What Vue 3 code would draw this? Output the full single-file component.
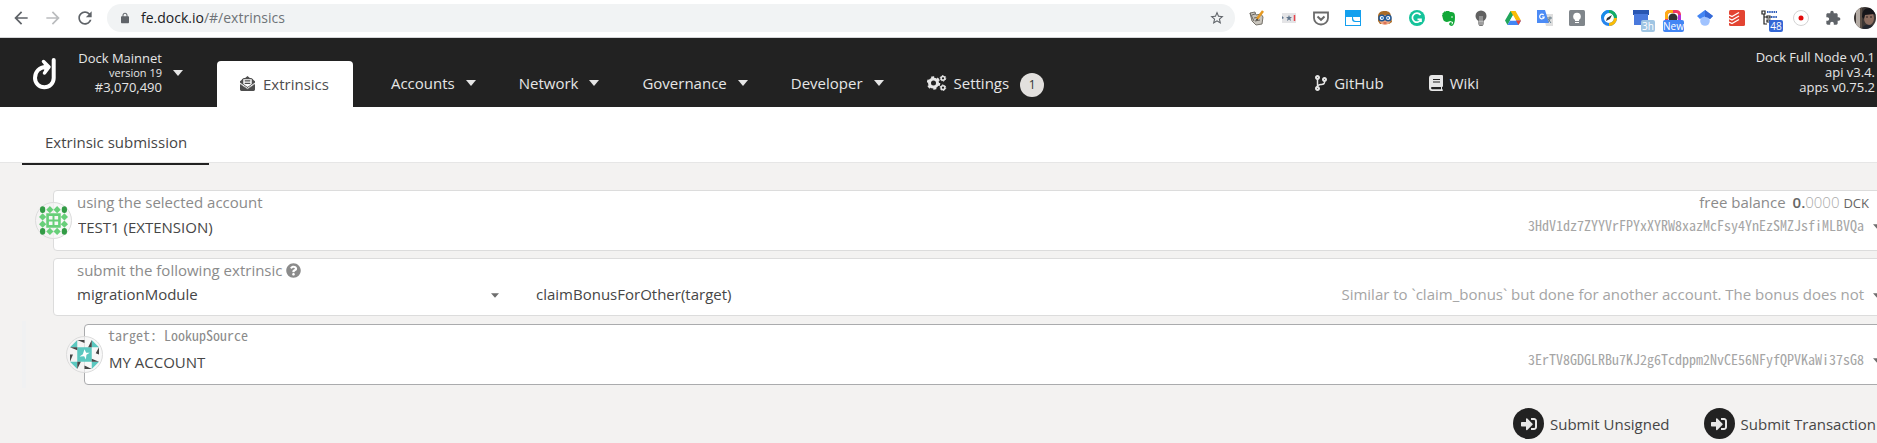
<script setup>
import { ref } from 'vue'

const menus = ['Accounts', 'Network', 'Governance', 'Developer']
const account = ref('TEST1 (EXTENSION)')
const section = ref('migrationModule')
const method = ref('claimBonusForOther(target)')
const target = ref('MY ACCOUNT')
const actions = ['Submit Unsigned', 'Submit Transaction']
const lattice = [11, 33, 55, 77]
const isCorner = (x, y) => (x === 11 || x === 77) && (y === 11 || y === 77)
const isEdge = (x, y) => x === 11 || x === 77 || y === 11 || y === 77
</script>

<template>
  <div class="window">
    <div class="browser">
      <div class="controls">
        <button class="tool" aria-label="Back"><svg viewBox="0 0 24 24"><path fill="#5f6368" d="M20 11H7.83l5.59-5.59L12 4l-8 8 8 8 1.41-1.41L7.83 13H20v-2z" /></svg></button>
        <button class="tool" aria-label="Forward"><svg viewBox="0 0 24 24"><path fill="#babcbe" d="M4 11h12.17l-5.59-5.59L12 4l8 8-8 8-1.41-1.41L16.17 13H4v-2z" /></svg></button>
        <button class="tool" aria-label="Reload"><svg viewBox="0 0 24 24"><path fill="#5f6368" d="M17.65 6.35C16.2 4.9 14.21 4 12 4c-4.42 0-7.99 3.58-7.99 8s3.57 8 7.99 8c3.73 0 6.84-2.55 7.73-6h-2.08c-.82 2.33-3.04 4-5.65 4-3.31 0-6-2.69-6-6s2.69-6 6-6c1.66 0 3.14.69 4.22 1.78L13 11h7V4l-2.35 2.35z" /></svg></button>
      </div>
      <div class="address">
        <svg class="lock" viewBox="4 1 16 21"><path fill="#5f6368" d="M18 8h-1V6c0-2.76-2.24-5-5-5S7 3.24 7 6v2H6c-1.1 0-2 .9-2 2v10c0 1.1.9 2 2 2h12c1.1 0 2-.9 2-2V10c0-1.1-.9-2-2-2zM9 6c0-1.66 1.34-3 3-3s3 1.34 3 3v2H9z" /></svg>
        <span class="url"><b>fe.dock.io</b>/#/extrinsics</span>
        <button class="star" aria-label="Bookmark"><svg viewBox="0 0 24 24"><path fill="#5f6368" d="M22 9.24l-7.19-.62L12 2 9.19 8.63 2 9.24l5.46 4.73L5.82 21 12 17.27 18.18 21l-1.63-7.03L22 9.24zM12 15.4l-3.76 2.27 1-4.28-3.32-2.88 4.38-.38L12 6.1l1.71 4.04 4.38.38-3.32 2.88 1 4.28L12 15.4z" /></svg></button>
      </div>
      <div class="extensions">
        <button aria-label="Notes"><svg viewBox="0 0 16 16"><path d="M1 3l5-1 1 3 5-1 2 3-1 7-6 1-4-4z" fill="#c9c5bd" stroke="#77736b" /><path d="M3 5l3-1M5 8l5-1M6 11l5-1M1 3l4 8" stroke="#68645e" /><path d="M8 9L14 1" stroke="#e69a22" stroke-width="2.5" /><path d="M7 10l2-1" stroke="#333" /></svg></button>
        <button aria-label="Password"><svg viewBox="0 0 16 16"><path d="M1 3h14v10H1z" fill="#e4e4e6" /><path d="M1 6l1 1 1 1-2 1M8 5l.8 2H11L9.300 8.500 10 11 8 9.500 6 11l.7-2.500L5 7h2.200z" fill="#60758c" /><path d="M13.500 5v6" stroke="#e8434a" stroke-width="1.500" /></svg></button>
        <button aria-label="Pocket"><svg viewBox="0 0 16 16"><path d="M1 2.500h14V8a7 6.500 0 0 1-14 0z" fill="none" stroke="#6b6b6b" stroke-width="1.800" /><path d="M4.500 6.500L8 9.800l3.500-3.300" fill="none" stroke="#6b6b6b" stroke-width="2" /></svg></button>
        <button aria-label="Tabs"><svg viewBox="0 0 16 16"><path d="M0 0h16v16H0z" fill="#14a0ee" /><path d="M1 7h6v2q0 3 3 3h5v3H1zM8 7h7v4h-4q-3 0-3-4z" fill="#fff" /></svg></button>
        <button aria-label="Owl"><svg viewBox="0 0 16 16"><path d="M1 7c0-5 3-6 7-6s6 2 6 6l1 5-3 2H3l-2-3z" fill="#aa6b25" /><ellipse cx="8" cy="10" rx="5.500" ry="5" fill="#f2a882" /><circle cx="4.800" cy="8" r="2.800" fill="#fff" stroke="#245892" stroke-width="1.500" /><circle cx="11.200" cy="8" r="2.800" fill="#fff" stroke="#245892" stroke-width="1.500" /><circle cx="5" cy="8" r="1" fill="#2678c9" /><circle cx="11" cy="8" r="1" fill="#2678c9" /><path d="M6.500 13h3" stroke="#bd3c35" /></svg></button>
        <button aria-label="Grammar"><svg viewBox="0 0 16 16"><circle cx="8" cy="8" r="8" fill="#15c39a" /><path d="M11.500 5A4.500 4.500 0 1 0 12 9.500M8.500 9.300H12V12" fill="none" stroke="#fff" stroke-width="1.700" /></svg></button>
        <button aria-label="Clipper"><svg viewBox="0 0 16 16"><path d="M1 5l4-4 3 0 1 1c4 0 5 1 5 5 0 5-1 8-3 9-3 0-4-3-1-4l1 1c0 1-1 1-1 1 1 1 2 0 2-2l-3-1c-1 1-6 2-7-2zM1 4l3-3v3z" fill="#12a838" /><circle cx="11" cy="7" r=".8" fill="#fff" /></svg></button>
        <button aria-label="Bulb"><svg viewBox="0 0 16 16"><circle cx="8" cy="6" r="5.500" fill="#616161" /><path d="M5 10h6v4l-1.500 2h-3L5 14z" fill="#777" /><path d="M5 12h6M5 14h6M7 6v6M9 6v6" stroke="#ddd" stroke-width=".8" /></svg></button>
        <button aria-label="Drive"><svg viewBox="0 0 16 16"><path d="M5.500 1h5L5 10.500 2.500 15 0 10.500z" fill="#21a65b" /><path d="M5.500 1h5L16 10.500h-5z" fill="#fbbc05" /><path d="M5 10.500h11L13.500 15h-11z" fill="#4285f4" /><path d="M11 10.500h5L13.500 15z" fill="#ea4335" /><path d="M8 5.300l3 5.200H5z" fill="#fff" /></svg></button>
        <button aria-label="Translate"><svg viewBox="0 0 16 16"><path d="M6 4h10v12H9z" fill="#dedede" /><path d="M0 0h8l4 13H0z" fill="#4c8bf5" /><path d="M6.700 5A2.300 2.300 0 1 0 7.200 7H5" fill="none" stroke="#fff" stroke-width="1.200" /><path d="M10 8h5M13 6.500V8c0 3-2 4-2 4m0-3l3 4" fill="none" stroke="#687e8b" /></svg></button>
        <button aria-label="Hints"><svg viewBox="0 0 16 16"><rect width="16" height="16" rx="1.500" fill="#80868b" /><circle cx="8" cy="6.500" r="3.800" fill="#fff" /><path d="M6 9h4v2H6zM6 12h4v1H6z" fill="#fff" /></svg></button>
        <button aria-label="Compass"><svg viewBox="0 0 16 16"><circle cx="8" cy="8" r="6.500" fill="#fff" stroke="#2685ee" stroke-width="3" /><path d="M8 1.500A6.500 6.500 0 0 1 14.500 8" fill="none" stroke="#14ae61" stroke-width="3" /><path d="M1.500 8A6.500 6.500 0 0 1 8 1.500" fill="none" stroke="#198be8" stroke-width="3" /><path d="M14.500 8A6.500 6.500 0 0 1 8 14.500" fill="none" stroke="#fbbc05" stroke-width="3" /><path d="M5 11l1-3 5-3-2 4z" fill="#333" /></svg></button>
        <button aria-label="Timer"><svg viewBox="0 0 16 16"><path d="M0 0h16v5H0z" fill="#2956b2" /><path d="M1 4h14v11H1z" fill="#4a79dc" /></svg><i class="tag pale">3h</i></button>
        <button aria-label="Camera"><svg viewBox="0 0 16 16"><rect x="1.500" y="1.500" width="13" height="13" rx="3" fill="#fff" stroke="#f33864" stroke-width="3" /><path d="M1.500 9V4q0-2.500 3-2.500H8" fill="none" stroke="#ffad15" stroke-width="3" /><path d="M14.500 5v7" stroke="#b333dc" stroke-width="3" /><circle cx="8" cy="8" r="4.500" fill="#333" /></svg><i class="tag bright">New</i></button>
        <button aria-label="Scholar"><svg viewBox="0 0 16 16"><circle cx="8" cy="11" r="4.800" fill="#a0c3ff" /><path d="M8 0l8 6-3 3q-5-5-10 0L0 6z" fill="#4285f4" /><path d="M8 0l8 6-3 3q-2-2-5-2z" fill="#3568d5" /></svg></button>
        <button aria-label="Tasks"><svg viewBox="0 0 16 16"><rect width="16" height="16" rx="1.500" fill="#e34432" /><path d="M0 5l3 1.500L10 2.500M0 8.500L3 10l7-4M0 12l3 1.500 7-4" fill="none" stroke="#fff" stroke-width="1.300" /></svg></button>
        <button aria-label="Tab tree"><svg viewBox="0 0 16 16"><path d="M1 1h3v3H1zM3 4v10h3M3 7h3M6 6h3v2H6zM6 10h3v2H6z" fill="none" stroke="#222" stroke-width="1.200" /><path d="M6 2h10M10 7h6M10 11h6" stroke="#315fba" stroke-width="2" stroke-dasharray="1.500 .7" /></svg><i class="tag blue">48</i></button>
        <button aria-label="Record"><svg viewBox="0 0 16 16"><circle cx="8" cy="8" r="7.500" fill="#fff" stroke="#d3d3d3" /><circle cx="8" cy="8" r="2.500" fill="#e30b0b" /></svg></button>
        <button aria-label="Extensions"><svg viewBox="0 0 24 24"><path fill="#5f6368" d="M20.5 11H19V7c0-1.1-.9-2-2-2h-4V3.5C13 2.12 11.88 1 10.5 1S8 2.12 8 3.500V5H4c-1.1 0-1.99.9-1.99 2v3.8H3.500c1.49 0 2.7 1.21 2.7 2.7s-1.21 2.7-2.7 2.7H2V20c0 1.1.9 2 2 2h3.8v-1.500c0-1.49 1.21-2.7 2.7-2.7 1.49 0 2.7 1.21 2.7 2.7V22H17c1.1 0 2-.9 2-2v-4h1.500c1.38 0 2.500-1.12 2.500-2.500S21.88 11 20.500 11z" /></svg></button>
        <button aria-label="Profile"><svg class="avatar" viewBox="0 0 22 22"><clipPath id="face"><circle cx="11" cy="11" r="11" /></clipPath><g clip-path="url(#face)"><path d="M0 0h22v22H0z" fill="#3d3735" /><path d="M2 0h4v22H2z" fill="#b5aca5" /><path d="M6 0h2v22H6z" fill="#5c5048" /><ellipse cx="15" cy="11" rx="5" ry="7" fill="#8c6d60" /><path d="M8 10q0-9 7-9t7 8l-2-2-9 1-1 4z" fill="#15151a" /><path d="M12 10h2M16 10h2" stroke="#2b2020" /><path d="M8 22q2-5 7-4t7 1v3z" fill="#23262f" /></g></svg></button>
      </div>
    </div>

    <header class="top">
      <button class="chain">
        <svg class="logo" viewBox="0 0 24 34"><path d="M21.700 4V22A9.300 9.300 0 0 1 3 22C3 16 7 11 14 11" fill="none" stroke="#fff" stroke-width="4" stroke-linecap="round" /><path d="M11.500 5.500L17 11l-4.500 6" fill="#fff" stroke="#fff" stroke-width="3.500" stroke-linejoin="round" stroke-linecap="round" /></svg>
        <span class="facts"><span>Dock Mainnet</span><small>version 19</small><span>#3,070,490</span></span>
        <svg class="caret" viewBox="0 0 10 6"><path d="M0 0h10L5 6z" /></svg>
      </button>
      <nav class="menu">
        <a class="item active" href="#/extrinsics"><svg class="glyph" viewBox="0 0 16 16"><path d="M2 3.500L4 2h1.500L8 0l2.500 2H12l2 1.500V4l2 1.500V8l-8 6-8-6V5.500L2 4z" fill="#4e4e4e" /><path d="M3.500 3.500h9v5L8 11.800 3.500 8.500z" fill="#fff" /><path d="M5 5.200h6M5 7.800h6" stroke="#4e4e4e" stroke-width="1.300" /><path d="M0 7.500l8 5.700 8-5.700" fill="none" stroke="#fff" /><path d="M0 8.500l8 5.500 8-5.500v6q0 1.500-1.500 1.500h-13Q0 16 0 14.500z" fill="#4e4e4e" /></svg>Extrinsics</a>
        <a v-for="m in menus" :key="m" class="item" href="#/">{{ m }}<svg class="caret" viewBox="0 0 10 6"><path d="M0 0h10L5 6z" /></svg></a>
        <a class="item" href="#/settings"><svg class="cogs" viewBox="0 0 20 16"><circle cx="6.500" cy="8" r="4" fill="none" stroke="#e6e6e6" stroke-width="3" /><circle cx="6.500" cy="8" r="5.800" fill="none" stroke="#e6e6e6" stroke-width="2" stroke-dasharray="3 3.070" /><circle cx="16" cy="3.300" r="1.900" fill="none" stroke="#e6e6e6" stroke-width="1.500" /><circle cx="16" cy="3.300" r="2.800" fill="none" stroke="#e6e6e6" stroke-width="1" stroke-dasharray="1.500 1.430" /><circle cx="16" cy="12.700" r="1.900" fill="none" stroke="#e6e6e6" stroke-width="1.500" /><circle cx="16" cy="12.700" r="2.800" fill="none" stroke="#e6e6e6" stroke-width="1" stroke-dasharray="1.500 1.430" /></svg>Settings<span class="count">1</span></a>
      </nav>
      <nav class="links">
        <a class="item" href="#/github"><svg class="branch" viewBox="0 0 384 512"><path fill="#e6e6e6" d="M384 144c0-44.2-35.8-80-80-80s-80 35.8-80 80c0 36.4 24.3 67.1 57.5 76.8-.6 16.1-4.2 28.5-11 36.9-15.4 19.2-49.3 22.4-85.2 25.7-28.2 2.600-57.4 5.400-81.3 16.9v-144c32.5-10.2 56-40.5 56-76.3 0-44.2-35.8-80-80-80S0 35.8 0 80c0 35.8 23.5 66.1 56 76.3v199.3C23.5 365.9 0 396.2 0 432c0 44.2 35.8 80 80 80s80-35.8 80-80c0-34-21.2-63.1-51.2-74.6 3.1-5.2 7.8-9.8 14.9-13.4 16.2-8.2 40.4-10.4 66.1-12.8 42.2-3.9 90-8.4 118.2-43.4 14-17.4 21.1-39.8 21.6-67.9 31.6-10.8 54.4-40.7 54.4-75.9zM80 64c8.8 0 16 7.2 16 16s-7.2 16-16 16-16-7.2-16-16 7.2-16 16-16zm0 384c-8.8 0-16-7.2-16-16s7.2-16 16-16 16 7.2 16 16-7.2 16-16 16zm224-320c8.8 0 16 7.2 16 16s-7.2 16-16 16-16-7.2-16-16 7.2-16 16-16z" /></svg>GitHub</a>
        <a class="item" href="#/wiki"><svg class="book" viewBox="0 0 14 16"><path d="M3 0h10q1 0 1 1v10q0 1-1 1v2.200q1 0 1 .9t-1 .9H3q-3 0-3-3V3q0-3 3-3z" fill="#e6e6e6" /><path d="M4 4.500h7M4 7h7" stroke="#222" stroke-width="1.100" /><path d="M12 12H3q-1 0-1 1t1 1.200h9z" fill="#222" /></svg>Wiki</a>
      </nav>
      <div class="facts node"><span>Dock Full Node v0.1</span><span>api v3.4.</span><span>apps v0.75.2</span></div>
    </header>

    <nav class="tabs"><a class="tab" href="#/extrinsics">Extrinsic submission</a></nav>

    <main class="page">
      <section class="panel">
        <span class="identicon"><svg viewBox="0 0 88 88"><template v-for="y in lattice" :key="y"><template v-for="x in lattice" :key="x"><ellipse v-if="isCorner(x, y)" :cx="x" :cy="y" rx="8" ry="10" fill="#329b45" /><path v-else-if="isEdge(x, y)" :transform="`translate(${x} ${y})`" d="M0-11L11 0 0 11-11 0z" fill="#67cf79" /></template></template><path d="M22 22h44v44H22z" fill="#67cf79" /><path d="M30 30h11v11H30zM47 30h11v11H47zM30 47h11v11H30zM47 47h11v11H47z" fill="#f8f8f8" /></svg></span>
        <div class="field grow">
          <label for="account">using the selected account</label>
          <select id="account" v-model="account" class="inset"><option>TEST1 (EXTENSION)</option></select>
        </div>
        <div class="aside">
          <p class="balance">free balance <span class="amount"><b>0.</b><i>0000</i> <small>DCK</small></span></p>
          <p class="hash">3HdV1dz7ZYYVrFPYxXYRW8xazMcFsy4YnEzSMZJsfiMLBVQa<svg class="drop" viewBox="0 0 9 5"><path d="M0 0h9L4.500 5z" /></svg></p>
        </div>
      </section>

      <section class="panel method">
        <div class="field grow">
          <label for="section">submit the following extrinsic <svg class="help" viewBox="0 0 512 512"><path fill="#8b8b8b" d="M504 256c0 136.997-111.043 248-248 248S8 392.997 8 256C8 119.083 119.043 8 256 8s248 111.083 248 248zM262.655 90c-54.497 0-89.255 22.957-116.549 63.758-3.536 5.286-2.353 12.415 2.715 16.258l34.699 26.31c5.205 3.947 12.621 3.008 16.665-2.122 17.864-22.658 30.113-35.797 57.303-35.797 20.429 0 45.698 13.148 45.698 32.958 0 14.976-12.363 22.667-32.534 33.976C247.128 238.528 216 254.941 216 296v4c0 6.627 5.373 12 12 12h56c6.627 0 12-5.373 12-12v-1.333c0-28.462 83.186-29.647 83.186-106.667 0-58.002-60.165-102-116.531-102zM256 338c-25.365 0-46 20.635-46 46 0 25.364 20.635 46 46 46s46-20.636 46-46c0-25.365-20.635-46-46-46z" /></svg></label>
          <div class="pair">
            <div class="choice"><select id="section" v-model="section"><option>migrationModule</option></select><svg class="drop" viewBox="0 0 9 5"><path d="M0 0h9L4.500 5z" /></svg></div>
            <div class="choice"><select v-model="method" aria-label="method"><option>claimBonusForOther(target)</option></select><span class="doc">Similar to `claim_bonus` but done for another account. The bonus does not</span><svg class="drop" viewBox="0 0 9 5"><path d="M0 0h9L4.500 5z" /></svg></div>
          </div>
        </div>
      </section>

      <div class="params">
        <section class="panel param">
          <span class="identicon"><svg viewBox="0 0 88 88"><path d="M0 22L22 0v22h44V0l22 22H66v44h22L66 88V66H22v22L0 66h22V22z" fill="#5bc8c0" /><path d="M22 0h22v9zM66 0v22H55zM88 22v22l-10-4zM66 57l22 9H66zM0 22h22v9zM0 44h9L0 66zM22 88V66h11zM44 77l22 11H44z" fill="#454545" /><path d="M44 28l5 11 11 0-10 6-2 14-5-10-14 1 10-7z" fill="#fff" /></svg></span>
          <div class="field grow">
            <label for="target" class="mono">target: LookupSource</label>
            <select id="target" v-model="target" class="inset"><option>MY ACCOUNT</option></select>
          </div>
          <p class="hash low">3ErTV8GDGLRBu7KJ2g6Tcdppm2NvCE56NFyfQPVKaWi37sG8<svg class="drop" viewBox="0 0 9 5"><path d="M0 0h9L4.500 5z" /></svg></p>
        </section>
      </div>

      <div class="actions">
        <button v-for="a in actions" :key="a" class="submit"><span class="disc"><svg viewBox="0 0 512 512"><path fill="#e6e6e6" d="M416 448h-84c-6.6 0-12-5.400-12-12v-40c0-6.6 5.400-12 12-12h84c17.7 0 32-14.3 32-32V160c0-17.7-14.3-32-32-32h-84c-6.6 0-12-5.400-12-12V76c0-6.6 5.400-12 12-12h84c53 0 96 43 96 96v192c0 53-43 96-96 96zm-47-201L201 79c-15-15-41-4.500-41 17v96H24c-13.3 0-24 10.7-24 24v96c0 13.3 10.7 24 24 24h136v96c0 21.500 26 32 41 17l168-168c9.3-9.400 9.3-24.600 0-34z" /></svg></span>{{ a }}</button>
      </div>
    </main>
  </div>
</template>

<style>
body { background: #f3f2f1; }
</style>

<style scoped>
.window { min-height: 100vh; overflow: hidden; background: #f3f2f1; color: #464646; font-family: "Open Sans", "Noto Sans", sans-serif; font-size: 15px; line-height: 20px; }
.window * { box-sizing: border-box; }
button, select { font: inherit; color: inherit; background: none; border: 0; padding: 0; margin: 0; }
a { color: inherit; text-decoration: none; }
p { margin: 0; }
svg { display: block; flex: none; }

.browser { display: flex; align-items: center; height: 38px; padding: 0 0 2px 5px; background: #fff; border-bottom: 1px solid #d5d6d8; }
.controls { display: flex; }
.tool { width: 32px; display: flex; justify-content: center; }
.tool svg { width: 20px; height: 20px; }
.address { flex: 1; display: flex; align-items: center; height: 28px; margin: 0 6px; padding: 0 10px 0 14px; border-radius: 14px; background: #f1f3f4; }
.lock { width: 8px; height: 12px; }
.url { flex: 1; margin-left: 12px; color: #6f7378; font-size: 14px; }
.url b { font-weight: 400; color: #202124; }
.star svg { width: 16px; height: 16px; }
.extensions { display: flex; margin-right: -4px; }
.extensions button { position: relative; width: 32px; height: 22px; display: flex; align-items: center; justify-content: center; }
.extensions svg { width: 16px; height: 16px; }
.extensions .avatar { width: 22px; height: 22px; }
.tag { position: absolute; left: 16px; top: 13px; min-width: 14px; border-radius: 2px; color: #fff; font: 10px/12px "Open Sans", sans-serif; text-align: center; }
.pale { background: #9fc5e3; }
.bright { left: 6px; min-width: 20px; background: #4285f4; }
.blue { background: #3367d6; }

.top { display: flex; align-items: flex-end; height: 69px; background: #222; color: #e6e6e6; }
.chain { align-self: stretch; display: flex; align-items: center; padding-left: 32px; width: 183px; }
.logo { width: 24px; height: 34px; }
.facts { flex: 1; display: flex; flex-direction: column; text-align: right; font-size: 13px; line-height: 15px; }
.facts small { font-size: 11px; line-height: 14px; }
.caret { width: 10px; height: 6px; margin-left: 11px; fill: #e6e6e6; }
.menu, .links { display: flex; }
.menu { margin-left: 34px; }
.item { display: flex; align-items: center; height: 46px; margin-left: 42px; padding-bottom: 2px; }
.menu .item { margin-left: 43px; }
.menu .active { margin: 0; padding: 0 24px 1px 23px; border-radius: 4px 4px 0 0; background: #fff; color: #4e4e4e; }
.menu .active + .item { margin-left: 38px; }
.glyph { width: 15px; height: 15px; margin-right: 8px; }
.cogs { width: 20px; height: 16px; margin-right: 7px; }
.branch { width: 12px; height: 16px; margin-right: 7px; }
.book { width: 14px; height: 16px; margin-right: 7px; }
.count { width: 24px; height: 24px; margin: 4px 0 0 11px; border-radius: 12px; background: #e2e0de; color: #333; font-size: 12px; line-height: 24px; text-align: center; }
.links { margin-left: auto; }
.links .item + .item { margin-left: 45px; }
.node { flex: 0 0 auto; align-self: center; width: 398px; padding-right: 2px; }

.tabs { display: flex; height: 56px; padding-left: 22px; align-items: flex-end; background: #fff; border-bottom: 1px solid #e6e6e6; }
.tab { padding: 9px 22px 11px 23px; margin-bottom: -3px; border-bottom: 2px solid #222; }

.page { padding: 27px 0 4px 53px; }
.panel { position: relative; display: flex; min-height: 61px; margin-right: -20px; padding: 1px 15px 0 23px; background: #fff; border: 1px solid #dcdcdc; border-radius: 4px; }
.field { display: flex; flex-direction: column; align-items: flex-start; gap: 5px; }
.grow { flex: 1; min-width: 0; }
label { color: #8b8b8b; }
select { appearance: none; height: 20px; outline: 0; }
.inset { margin-left: 1px; }
.identicon { position: absolute; left: -19px; top: 11px; width: 37px; height: 37px; display: flex; align-items: center; justify-content: center; border: 1px solid #dcdcdc; border-radius: 50%; background: rgba(245, 245, 245, 0.7); }
.identicon svg { width: 29px; height: 29px; }
.aside { text-align: right; color: #8b8b8b; }
.balance { padding-right: 12px; }
.amount { margin-left: 3px; }
.amount b { font-weight: 600; color: #666; }
.amount i { font-style: normal; font-weight: 300; color: #aaa; }
.amount small { font-size: 13px; color: #666; }
.hash, .mono { font-family: "Noto Sans Mono CJK SC", "Liberation Mono", monospace; font-size: 14px; }
.hash { display: flex; align-items: center; padding-top: 2px; color: #a5a5a5; }
.low { align-self: flex-start; padding-top: 24px; }
.drop { width: 8px; height: 5px; margin: 3px 0 0 9px; fill: #6e6e6e; }
.method { min-height: 58px; margin-top: 7px; }
.method .field { gap: 4px; align-items: stretch; }
.help { display: inline-block; width: 15px; height: 15px; vertical-align: -2px; }
.pair { display: grid; grid-template-columns: 422px 1fr; gap: 37px; }
.choice { display: flex; align-items: center; }
.choice select { flex: 1; }
.doc { color: #a5a5a5; }
.params { margin: 5px 0 0 -31px; padding: 3px 0 3px 58px; border-left: 4px solid #f0f1f2; }
.param { padding-top: 0; border-color: #aaabad; }
.param .field { gap: 7px; }
.actions { display: flex; justify-content: flex-end; gap: 34px; margin-top: 20px; padding-right: 1px; }
.submit { display: flex; align-items: center; gap: 6px; }
.disc { display: flex; align-items: center; justify-content: center; width: 31px; height: 31px; border-radius: 50%; background: #222; }
.disc svg { width: 16px; height: 16px; }
</style>
